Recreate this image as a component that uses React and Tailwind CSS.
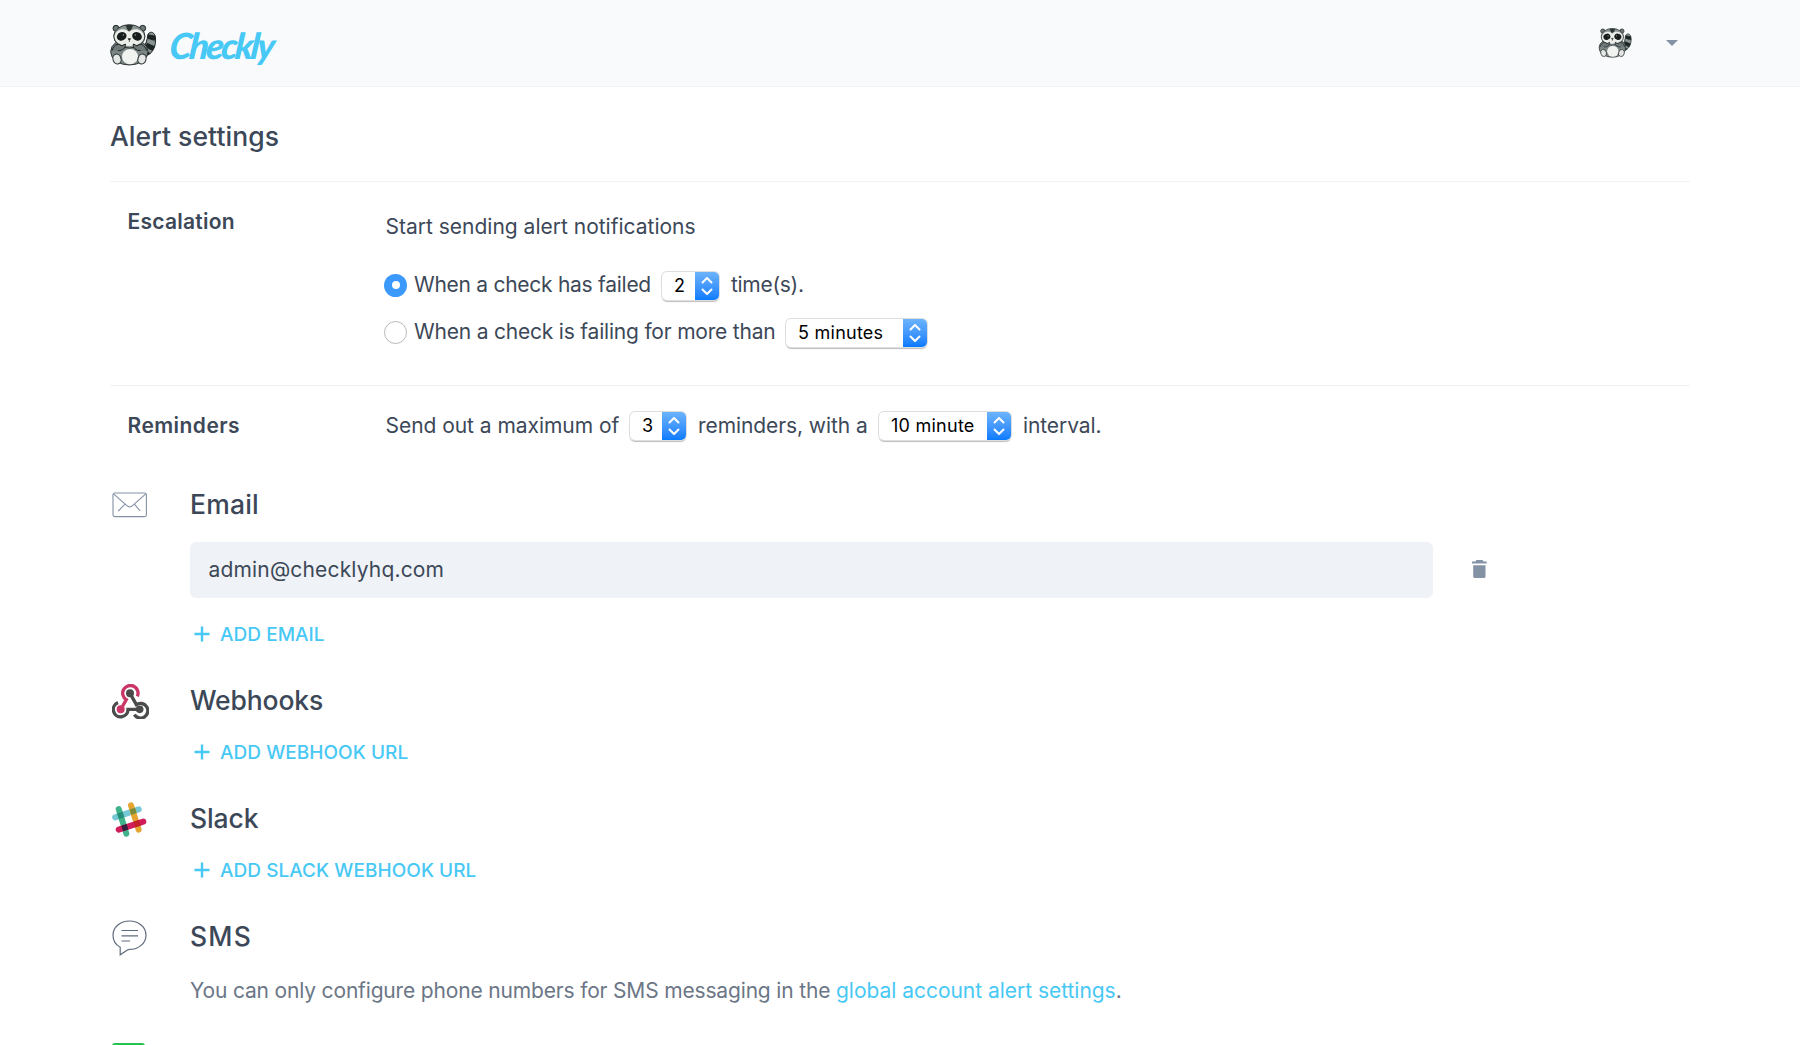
import React from "react";

function Raccoon({ className }) {
  return (
    <svg viewBox="0 0 138 126" className={className} fill="none">
      <path d="M104 96C128 92 140 66 136 38C132 20 116 22 113 34C112 48 108 60 98 74Z" fill="#8a9493" stroke="#1d2424" strokeWidth="3" />
      <path d="M114 30C122 34 130 32 136 36L137 50C128 50 120 46 112 44ZM111 56C120 60 128 64 135 66L128 80C120 78 112 72 105 68ZM104 78L122 88L108 97Z" fill="#1d2424" />
      <circle cx="18" cy="13" r="9" fill="#6e7877" stroke="#1d2424" strokeWidth="3" />
      <circle cx="98" cy="13" r="9" fill="#6e7877" stroke="#1d2424" strokeWidth="3" />
      <ellipse cx="58" cy="83" rx="56" ry="40" fill="#7b8685" stroke="#2b3333" strokeWidth="3" />
      <ellipse cx="58" cy="37" rx="47" ry="35" fill="#8a9493" stroke="#2b3333" strokeWidth="3" />
      <path d="M46 3H70L62 20H54Z" fill="#2b3333" />
      <path d="M57 24C46 10 18 14 14 36C12 54 34 66 58 66C82 66 104 54 102 36C98 14 70 10 57 24Z" fill="#eceee9" />
      <ellipse cx="35" cy="37" rx="15" ry="12.500" transform="rotate(-25 35 37)" fill="#171c1c" />
      <ellipse cx="81" cy="37" rx="15" ry="12.500" transform="rotate(25 81 37)" fill="#171c1c" />
      <circle cx="40" cy="33" r="2.500" fill="#8d9595" />
      <circle cx="76" cy="33" r="2.500" fill="#8d9595" />
      <path d="M54 44H62L58 49ZM58 49V54" fill="#171c1c" stroke="#171c1c" strokeWidth="2" />
      <ellipse cx="60" cy="98" rx="24" ry="23" fill="#f1f3f0" />
      <path d="M6 80C12 58 30 58 34 66L46 60C48 72 38 80 24 80M110 80C104 58 86 58 82 66L70 60C68 72 78 80 92 80" fill="#6e7877" stroke="#1d2424" strokeWidth="3" strokeLinejoin="round" />
      <ellipse cx="21" cy="105" rx="12" ry="15" transform="rotate(-18 21 105)" fill="#e4e7e4" stroke="#2b3333" strokeWidth="3" />
      <ellipse cx="96" cy="105" rx="12" ry="15" transform="rotate(18 96 105)" fill="#e4e7e4" stroke="#2b3333" strokeWidth="3" />
    </svg>
  );
}

function EnvelopeIcon() {
  return (
    <svg viewBox="0 0 36 26" className="h-[26px] w-9" fill="none" stroke="#8492a6" strokeWidth="1.1">
      <rect x="1" y="1" width="33.4" height="23.6" rx="1.8" />
      <path d="M1.6 1.8L14.6 13.4Q17.7 16.4 20.8 13.4L33.8 1.8M13 12.2L6.2 19M22.4 12.2L28.2 19" />
    </svg>
  );
}

function WebhookIcon() {
  return (
    <svg viewBox="0 0 111 105" className="h-[35px] w-[37px]" fill="none" strokeWidth="10">
      <path d="M76 37A23 23 0 1 0 43 47L27 75" stroke="#ca3766" />
      <circle cx="26" cy="76" r="12" fill="#ca3766" />
      <path d="M54 28L73 62A22 22 0 1 1 67 92" stroke="#4b4b4b" />
      <circle cx="54" cy="28" r="12" fill="#4b4b4b" />
      <path d="M82 76H48A22 22 0 1 1 18 56" stroke="#4b4b4b" />
      <circle cx="83" cy="76" r="11.500" fill="#4b4b4b" />
    </svg>
  );
}

function SlackIcon() {
  return (
    <svg viewBox="0 0 105 105" className="h-[35px] w-[35px]" strokeWidth="18" strokeLinecap="round">
      <path d="M9.500 46L80 22" stroke="#76c8d6" />
      <path d="M57 10L80 83" stroke="#e3a530" />
      <path d="M20 21L43 95" stroke="#3eb38a" />
      <path d="M20 83L94 59" stroke="#d01c5a" />
      <path d="M15.600 34.600L31.600 29.400L36.600 45.600L20.600 51Z" fill="#278c79" stroke="none" />
      <path d="M53 22.200L69 17L74 33L58 38.400Z" fill="#7a8b3c" stroke="none" />
      <path d="M28 71.200L44 66L49 82.200L33 87.500Z" fill="#361d3c" stroke="none" />
      <path d="M65 59.300L81 54L86 70.200L70 75.500Z" fill="#c32027" stroke="none" />
    </svg>
  );
}

function SmsIcon() {
  return (
    <svg viewBox="0 0 36 36" className="h-9 w-9" fill="none" stroke="#5f6b7c" strokeWidth="1.2">
      <path d="M17.500 1C26.500 1 34 7 34 15.200S26.500 29.400 17.500 29.400Q16.500 29.400 15.800 29.700L8.200 34.800V27.200C3.500 24.600 1 20 1 15.200C1 7 8.500 1 17.500 1Z" />
      <path d="M9.500 10.500H26M9.500 15.800H26M9.500 21H18" />
    </svg>
  );
}

function TrashIcon() {
  return (
    <svg viewBox="0 0 15 18" className="h-[18px] w-[15px]" fill="#8492a6">
      <path d="M4.500 0H10.500L11.500 1.500H14.700V3.600H0V1.500H3.500ZM1.200 5.200H13.500V16.500Q13.500 18 12 18H2.700Q1.200 18 1.200 16.500Z" />
    </svg>
  );
}

function Select({ className, children }) {
  return (
    <span className={"flex h-7 shrink-0 overflow-hidden rounded-[5px] bg-white text-[18px] leading-7 text-black shadow-[0_0_0_1px_#dedede,0_1.5px_1px_#bdbdbd] " + className}>
      <span className="flex-1 whitespace-nowrap pl-3 tracking-[0.25px]">{children}</span>
      <span className="flex w-6 items-center justify-center bg-linear-to-b from-[#6bb3fa] to-[#067bff]">
        <svg viewBox="0 0 14 20" className="h-5 w-3.5" fill="none" stroke="white" strokeWidth="2" strokeLinecap="round" strokeLinejoin="round">
          <path d="M2.500 6.500L7 2L11.500 6.500M2.500 13.500L7 18L11.500 13.500" />
        </svg>
      </span>
    </span>
  );
}

function AddLink({ children }) {
  return (
    <a className="flex h-6 items-center text-[19px] font-medium leading-6 text-[#47c8f5]">
      <svg viewBox="0 0 16 16" className="ml-1 h-4 w-4" stroke="currentColor" strokeWidth="2.400">
        <path d="M8 .5V15.500M.5 8H15.500" />
      </svg>
      <span className="ml-2.5 whitespace-nowrap pt-0.5 tracking-[0.05px]">{children}</span>
    </a>
  );
}

function Channel({ icon, title, className, titleClass, children }) {
  return (
    <section className={"flex " + className}>
      <div className="w-20 shrink-0 pl-[1.5px]">{icon}</div>
      <div className="flex-1">
        <h2 className={"h-9 text-[26.500px] font-[450] leading-9 " + titleClass}>{title}</h2>
        {children}
      </div>
    </section>
  );
}

export default function App() {
  return (
    <div className="h-[1045px] w-full overflow-hidden bg-white font-['Inter',sans-serif] text-[#3c4858]">
      <header className="flex h-[87px] items-start border-b border-[#eff2f7] bg-[#f9fafc] pl-[110px]">
        <Raccoon className="mt-6 h-[42px] w-[46px]" />
        <span className="ml-[14px] mt-5 w-[111px] -skew-x-6 whitespace-nowrap font-['Lato',sans-serif] text-[36px] font-black italic leading-[50px] tracking-[-2.6px] text-[#47c8f5]">Checkly</span>
        <span className="flex-1" />
        <Raccoon className="mt-7 h-[30px] w-[34px]" />
        <svg viewBox="0 0 12 6" className="ml-[34px] mr-[122px] mt-10 h-1.5 w-3" fill="#8492a6"><path d="M0 0H12L6 6Z" /></svg>
      </header>
      <main className="mx-[110px]">
        <h1 className="h-[95px] border-b border-[#eff2f7] pt-[30px] text-[26.500px] font-[450] leading-[38px] tracking-[0.05px]">Alert settings</h1>
        <section className="flex h-[204px] border-b border-[#eff2f7] text-[21px] leading-[30px]">
          <h3 className="w-[275.500px] pl-[17.500px] pt-[25px] font-semibold tracking-[0.25px]">Escalation</h3>
          <div>
            <p className="pt-[30px]">Start sending alert notifications</p>
            <div className="mt-7 flex h-[30px] items-center">
              <span className="-ml-[1.5px] flex size-[23px] items-center justify-center rounded-full bg-[#3b99fc]"><span className="size-2 rounded-full bg-white" /></span>
              <span className="ml-[7px] w-[248px] whitespace-nowrap tracking-[-0.27px]">When a check has failed</span>
              <Select className="mt-0.5 w-[57px]">2</Select>
              <span className="ml-3 whitespace-nowrap tracking-[-0.3px]">time(s).</span>
            </div>
            <div className="mt-[17px] flex h-[30px] items-center">
              <span className="-ml-[1.5px] size-[23px] rounded-full border border-[#b9b9b9] bg-white" />
              <span className="ml-[7px] w-[372px] whitespace-nowrap tracking-[-0.2px]">When a check is failing for more than</span>
              <Select className="mt-0.5 w-[141px]">5 minutes</Select>
            </div>
          </div>
        </section>
        <section className="flex h-[92px] pt-[25px] text-[21px] leading-[30px]">
          <h3 className="w-[275.500px] pl-[17.500px] font-semibold tracking-[0.45px]">Reminders</h3>
          <div className="flex h-[30px] items-center whitespace-nowrap">
            <span className="w-[244.500px] tracking-[-0.04px]">Send out a maximum of</span>
            <Select className="w-[56px]">3</Select>
            <span className="ml-3 w-[181px] tracking-[-0.08px]">reminders, with a</span>
            <Select className="w-[132px]">10 minute</Select>
            <span className="ml-3 tracking-[-0.1px]">interval.</span>
          </div>
        </section>
        <div className="flex flex-col pt-2">
          <Channel title="Email" className="" titleClass="tracking-[0.2px]" icon={<div className="pt-1.5"><EnvelopeIcon /></div>}>
            <div className="mt-5 flex items-center">
              <div className="h-14 w-[1243px] rounded-md bg-[#eff2f7] pl-[18.500px] text-[21px] leading-[56px] tracking-[0.17px]">admin@checklyhq.com</div>
              <div className="mb-0.5 ml-[39px]"><TrashIcon /></div>
            </div>
            <div className="mt-6"><AddLink>ADD EMAIL</AddLink></div>
          </Channel>
          <Channel title="Webhooks" className="mt-9" titleClass="tracking-[-0.15px]" icon={<div className="pt-0.5"><WebhookIcon /></div>}>
            <div className="mt-[22px]"><AddLink>ADD WEBHOOK URL</AddLink></div>
          </Channel>
          <Channel title="Slack" className="mt-9" titleClass="tracking-[-0.1px]" icon={<div className="pt-0.5"><SlackIcon /></div>}>
            <div className="mt-[22px]"><AddLink>ADD SLACK WEBHOOK URL</AddLink></div>
          </Channel>
          <Channel title="SMS" className="mt-9" titleClass="tracking-[1.2px]" icon={<div className="pt-0.5"><SmsIcon /></div>}>
            <p className="mt-[22px] whitespace-nowrap text-[21px] leading-[30px] text-[#6b7686]"><span className="tracking-[-0.165px]">You can only configure phone numbers for SMS messaging in the </span><a className="tracking-[-0.03px] text-[#47c8f5]">global account alert settings</a>.</p>
          </Channel>
          <div className="ml-0.5 mt-[37px] h-[34px] w-[33px] shrink-0 rounded-[3px] bg-[#25c151]" />
        </div>
      </main>
    </div>
  );
}
